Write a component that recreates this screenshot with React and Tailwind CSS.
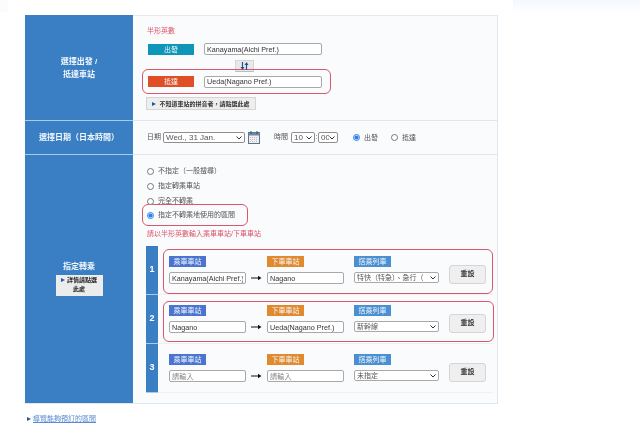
import React from 'react';

const stationInput = 'h-[12px] border border-[#a9a9a9] rounded-[2px] bg-white px-[2px] text-[7.2px] leading-[10px] text-[#333] outline-none placeholder:text-[#888]';

const SelectBox = ({ width, height = 'h-[11px]', value, textClass = 'text-[8px]', borderClass = 'border-[#8f8f8f]' }) => (
  <div className={`relative shrink-0 ${width} ${height}`}>
    <select className={`appearance-none block w-full h-full border rounded-[2px] bg-white pl-[2px] pr-[8px] leading-[9px] text-[#555] outline-none ${textClass} ${borderClass}`}>
      <option>{value}</option>
    </select>
    <svg width="6" height="4" viewBox="0 0 6 4" className="absolute right-[3px] top-[4px]">
      <path d="M0.5 0.5L3 3L5.5 0.5" fill="none" stroke="#333" strokeWidth="1" />
    </svg>
  </div>
);

const Arrow = () => (
  <svg width="11" height="6" viewBox="0 0 11 6" className="mx-[5px] shrink-0">
    <path d="M0 3h8" stroke="#111" strokeWidth="1" />
    <path d="M7 0.8L10.5 3L7 5.2z" fill="#111" />
  </svg>
);

const SwapIcon = () => (
  <svg width="9" height="8" viewBox="0 0 9 8">
    <path d="M2.5 0v6M6.5 8V2" stroke="#1f5596" strokeWidth="1.2" />
    <path d="M0.5 5L2.5 8L4.5 5zM4.5 3L6.5 0L8.5 3z" fill="#1f5596" />
  </svg>
);

const Triangle = () => (
  <span className="inline-block w-0 h-0 border-y-[2.5px] border-y-transparent border-l-[4px] border-l-[#1e5a9e] shrink-0" />
);

const Radio = ({ label, checked, name }) => (
  <label className="flex items-center gap-[4px] text-[7px] leading-[10px] text-[#555]">
    <input type="radio" name={name} defaultChecked={checked} className="w-[7px] h-[7px] m-0 accent-[#2f7fe8]" />
    <span>{label}</span>
  </label>
);

const CalendarIcon = () => (
  <svg width="12" height="13" viewBox="0 0 12 13" className="ml-[3px] shrink-0">
    <rect x="0.5" y="1.5" width="11" height="11" fill="#eef1f4" stroke="#5f7388" />
    <rect x="0.5" y="1.5" width="11" height="3" fill="#6f8aa6" />
    <path d="M3 0v3M9 0v3" stroke="#35506c" />
    <path d="M2 6.5h8M2 8.5h8M2 10.5h8" stroke="#c98f8f" strokeWidth="0.6" strokeDasharray="1 1" />
  </svg>
);

const SideCell = ({ className, children }) => (
  <div className={`w-[108px] shrink-0 bg-[#3a7fc4] flex flex-col items-center justify-center text-[#f2f7fc] font-bold text-[8px] leading-[13px] ${className}`}>
    {children}
  </div>
);

const Tag = ({ color, children }) => (
  <div className={`w-[37px] h-[11px] flex items-center justify-center text-[#f3f6fb] text-[7px] leading-none ${color}`}>{children}</div>
);

const TransferFields = ({ from, to, train, placeholder }) => (
  <div className="flex items-start">
    <div className="flex flex-col gap-[5px]">
      <Tag color="bg-[#4a74cf]">乘車車站</Tag>
      <div className="flex items-center">
        <input className={`${stationInput} w-[77px]`} defaultValue={from} placeholder={placeholder} />
        <Arrow />
      </div>
    </div>
    <div className="flex flex-col gap-[5px]">
      <Tag color="bg-[#e08a2e]">下車車站</Tag>
      <input className={`${stationInput} w-[77px]`} defaultValue={to} placeholder={placeholder} />
    </div>
    <div className="flex flex-col gap-[5px] ml-[10px]">
      <Tag color="bg-[#4a90d0]">搭乘列車</Tag>
      <SelectBox width="w-[85px]" value={train} textClass="text-[7px]" borderClass="border-[#a9a9a9]" />
    </div>
    <button className="ml-[10px] mt-[9px] w-[37px] h-[19px] border border-[#d5d5d5] rounded-[3px] bg-[#efefef] text-[7px] font-bold text-[#333]">重設</button>
  </div>
);

const TransferRow = ({ num, rowClass, boxClass, ...fields }) => (
  <div className="flex h-[49px]">
    <div className="w-[12px] shrink-0 bg-[#3a7fc4] border-b border-[#a8cbe8] flex items-center justify-center text-white font-bold text-[9px]">{num}</div>
    <div className={`flex-1 pl-[5px] border-b border-[#f0f0f0] ${rowClass}`}>
      <div className={`${boxClass} border rounded-[6px] pl-[5px]`}>
        <TransferFields {...fields} />
      </div>
    </div>
  </div>
);

const App = () => {
  return (
    <div className="relative w-[640px] h-[424px] bg-white overflow-hidden font-['Liberation_Sans','Noto_Sans_CJK_TC',sans-serif] blur-[0.5px]">
      <div className="absolute right-0 top-0 w-[127px] h-[14px] bg-linear-to-b from-[#f4f8fd] to-white" />
      <div className="absolute left-0 top-0 w-[8px] h-[12px] bg-[#fafcfe]" />

      <div className="pl-[25px] pt-[15px]">
        <div className="w-[473px] border-r border-b border-[#dfe8ef]">
          {/* departure / arrival */}
          <div className="flex h-[106px] border-b border-[#e0e6ec]">
            <SideCell className="h-[106px] border-b border-[#a8cbe8]">
              <span>選擇出發 /</span>
              <span>抵達車站</span>
            </SideCell>
            <div className="flex-1 bg-[#fafbfc] border-t border-[#e6ebf0] pl-[14px] pt-[10px]">
              <div className="text-[7px] leading-[10px] text-[#d9566b]">半形英數</div>
              <div className="flex items-center mt-[7px] ml-[1px]">
                <div className="w-[46px] h-[11px] bg-[#0f95b8] text-[#f3f6fb] text-[7px] leading-[11px] text-center">出發</div>
                <input className={`${stationInput} ml-[10px] w-[118px]`} defaultValue="Kanayama(Aichi Pref.)" />
              </div>
              <div className="ml-[88px] mt-[5px] w-[19px] h-[12px] border border-[#d5d5d5] border-b-[#bdbdbd] bg-[#e9e9e9] flex items-center justify-center">
                <SwapIcon />
              </div>
              <div className="-ml-[5px] mt-[-3px] w-[189px] h-[25px] border border-[#d9566b] rounded-[6px] pl-[5px] flex items-center">
                <div className="w-[46px] h-[11px] bg-[#e04e25] text-[#f3f6fb] text-[7px] leading-[11px] text-center">抵達</div>
                <input className={`${stationInput} ml-[10px] w-[118px]`} defaultValue="Ueda(Nagano Pref.)" />
              </div>
              <button className="mt-[3px] -ml-[1px] w-[110px] h-[13px] border border-[#d5d5d5] bg-[#eeeeee] flex items-center justify-center gap-[3px] text-[6px] leading-none font-bold text-[#333] whitespace-nowrap">
                <Triangle />
                不知道車站的拼音者，請點選此處
              </button>
            </div>
          </div>

          {/* date */}
          <div className="flex h-[34px] border-b border-[#e0e6ec]">
            <SideCell className="h-[34px] border-b border-[#a8cbe8]">選擇日期（日本時間）</SideCell>
            <div className="flex-1 bg-[#fafbfc] flex items-center pl-[14px] text-[7px] text-[#555]">
              <span className="mr-[2px]">日期</span>
              <SelectBox width="w-[82px]" value="Wed., 31 Jan." />
              <CalendarIcon />
              <span className="ml-[14px] mr-[3px]">時間</span>
              <SelectBox width="w-[24px]" value="10" />
              <span className="w-[3px] text-center">:</span>
              <SelectBox width="w-[20px]" value="00" />
              <div className="ml-[15px]"><Radio name="when" label="出發" checked /></div>
              <div className="ml-[13px]"><Radio name="when" label="抵達" /></div>
            </div>
          </div>

          {/* transfer */}
          <div className="flex h-[248px]">
            <SideCell className="h-[248px]">
              <span className="-mt-[3px]">指定轉乘</span>
              <button className="mt-[2px] w-[47px] h-[21px] bg-[#ececec] text-[#222] text-[6px] leading-[9px] font-bold">
                <span className="inline-block align-middle mr-[2px]"><Triangle /></span>
                詳情請點選<br />此處
              </button>
            </SideCell>
            <div className="flex-1 bg-[#fafbfc] pl-[13px] pt-[11px]">
              <div className="flex flex-col gap-[5px] pl-[1px]">
                <Radio name="via" label="不指定（一般搜尋）" />
                <Radio name="via" label="指定轉乘車站" />
                <Radio name="via" label="完全不轉乘" />
              </div>
              <div className="-ml-[4px] mt-[-2px] w-[106px] h-[22px] border border-[#d9566b] rounded-[6px] pl-[4px] flex items-center">
                <Radio name="via" label="指定不轉乘地使用的區間" checked />
              </div>
              <div className="mt-[3px] ml-[1px] text-[7px] leading-[10px] text-[#d9566b]">請以半形英數輸入乘車車站/下車車站</div>
              <div className="mt-[7px] w-[345px]">
                <TransferRow num="1" rowClass="pt-[3px]" boxClass="w-[330px] h-[45px] pt-[6px] border-[#d9566b]" from="Kanayama(Aichi Pref.)" to="Nagano" train="特快（特急）、急行（" />
                <TransferRow num="2" rowClass="pt-[6px]" boxClass="w-[331px] h-[41px] pt-[3px] border-[#d9566b]" from="Nagano" to="Ueda(Nagano Pref.)" train="新幹線" />
                <TransferRow num="3" rowClass="pt-[3px]" boxClass="w-[330px] pt-[6px] border-transparent" placeholder="請輸入" train="未指定" />
              </div>
            </div>
          </div>
        </div>

        <a href="#" className="mt-[10px] ml-[2px] flex items-center gap-[2px] text-[7px] leading-[10px] text-[#5b8ad0] underline">
          <Triangle />
          導覽能夠預訂的區間
        </a>
      </div>
    </div>
  );
};

export default App;
